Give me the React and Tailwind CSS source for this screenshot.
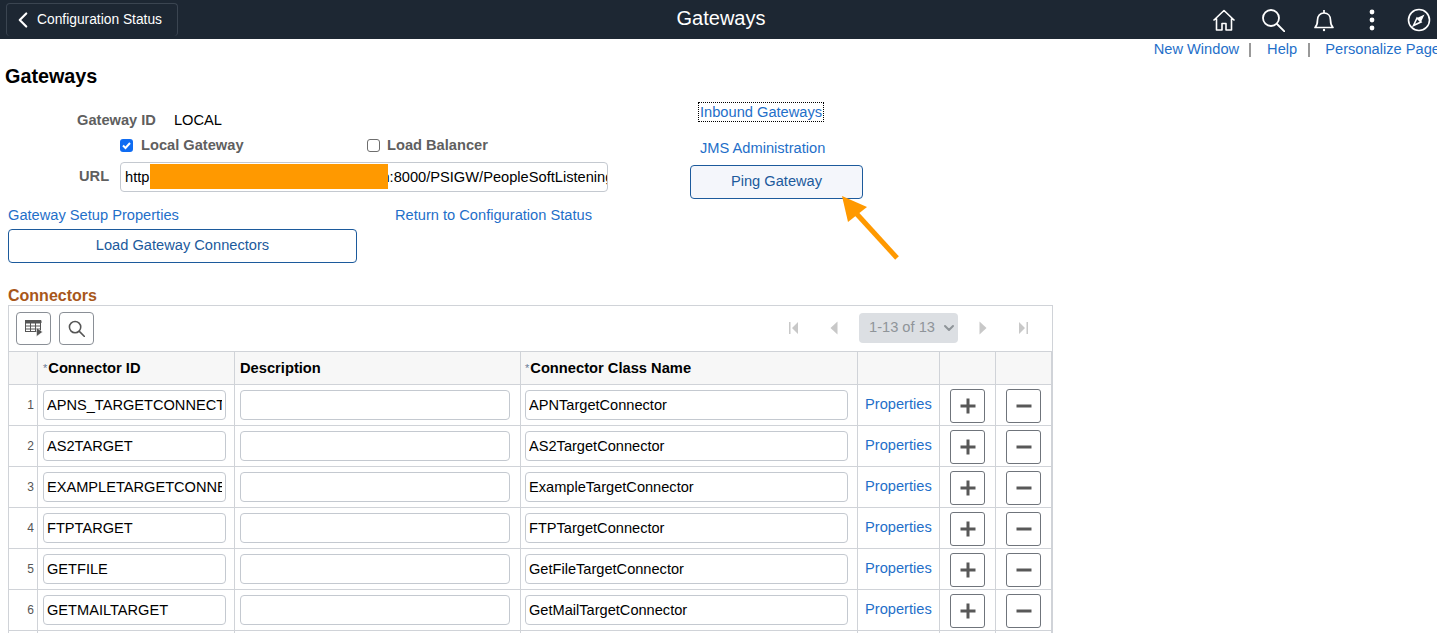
import React from 'react';
import { ChevronLeft, ChevronDown } from 'lucide-react';

const rows = [
  { id: 'APNS_TARGETCONNECTOR', cls: 'APNTargetConnector' },
  { id: 'AS2TARGET', cls: 'AS2TargetConnector' },
  { id: 'EXAMPLETARGETCONNECTOR', cls: 'ExampleTargetConnector' },
  { id: 'FTPTARGET', cls: 'FTPTargetConnector' },
  { id: 'GETFILE', cls: 'GetFileTargetConnector' },
  { id: 'GETMAILTARGET', cls: 'GetMailTargetConnector' },
  { id: 'HTTPTARGET', cls: 'HttpTargetConnector' },
];

const gridCols = 'grid grid-cols-[29px_197px_286px_337px_82px_56px_56px]';
const cell = 'border-r border-b border-[#d0d3d8] flex items-center min-w-0';
const textInput =
  'h-[30px] bg-white border border-[#c4c9d0] rounded-[4px] px-[3px] text-[14.6px] text-black outline-none';

const HomeIcon = () => (
  <svg width="24" height="24" viewBox="0 0 24 24" fill="none" stroke="white" strokeWidth="1.6">
    <path d="M1.5 12.5 12 2.5l10.5 10M4.5 10.5V22H10v-6.500h4V22h5.500V10.5" strokeLinejoin="round" />
  </svg>
);

const SearchIcon = ({ size = 24, color = 'white', sw = 1.8 }) => (
  <svg width={size} height={size} viewBox="0 0 24 24" fill="none" stroke={color} strokeWidth={sw}>
    <circle cx="10" cy="10" r="8" />
    <path d="m16 16 7.5 7.5" strokeLinecap="round" />
  </svg>
);

const BellIcon = () => (
  <svg width="22" height="24" viewBox="0 0 22 24" fill="none" stroke="white" strokeWidth="1.7">
    <path d="M2 19.5c2-2 2.500-4 2.500-7.500 0-4 2.500-7 6.500-7s6.500 3 6.500 7c0 3.500.5 5.500 2.500 7.500z" strokeLinejoin="round" />
    <path d="M11 5V2" />
    <circle cx="11" cy="22" r="1.2" fill="white" stroke="none" />
  </svg>
);

const DotsIcon = () => (
  <svg width="8" height="22" viewBox="0 0 8 22" fill="white">
    <circle cx="4" cy="3" r="2.4" />
    <circle cx="4" cy="11" r="2.4" />
    <circle cx="4" cy="19" r="2.4" />
  </svg>
);

const CompassIcon = () => (
  <svg width="24" height="24" viewBox="0 0 24 24" fill="none" stroke="white" strokeWidth="1.6">
    <circle cx="12" cy="12" r="10.5" />
    <path d="m17.5 6.5-3.500 7.500-4-4z" fill="white" stroke="none" />
    <path d="m6.5 17.5 3.500-7.500 4 4z" />
  </svg>
);

const GridIcon = () => (
  <svg width="18" height="17" viewBox="0 0 18 17" fill="none" stroke="#555" strokeWidth="1">
    <rect x="0.5" y="0.5" width="15" height="11" />
    <path d="M0 0.5h16V3H0z" fill="#555" />
    <path d="M0 6h16M0 9h16M5.5 3v9M10.5 3v9" />
    <path d="M11.5 7.5v9l6-4.500z" fill="#555" stroke="white" strokeWidth="0.5" />
  </svg>
);

const FirstIcon = ({ flip }) => (
  <svg width="14" height="14" viewBox="0 0 14 14" fill="#c8c8c8" className={flip ? 'rotate-180' : ''}>
    <path d="M1 1h1.5v12H1zM10 1v12L4 7z" />
  </svg>
);

const PrevIcon = ({ flip }) => (
  <svg width="8" height="14" viewBox="0 0 8 14" fill="#c8c8c8" className={flip ? 'rotate-180' : ''}>
    <path d="M7.5 0.5v13L0.5 7z" />
  </svg>
);

const Arrow = () => (
  <svg
    className="absolute left-[835px] top-[190px]"
    width="72"
    height="76"
    viewBox="0 0 72 76"
    fill="none"
  >
    <path d="M7 6 32 17 13 32z" fill="#ff9900" />
    <path d="M20 22 62 68" stroke="#ff9900" strokeWidth="5" />
  </svg>
);

const TopBar = () => (
  <div className="h-[39px] bg-[#1d2733] flex items-start shrink-0">
    <div className="flex-1">
      <div className="ml-[6px] mt-[3px] w-[172px] h-[33px] border border-[#3b4551] rounded-[4px] border-b-0 flex items-center text-white text-[13.8px]">
        <ChevronLeft size={26} strokeWidth={2} className="ml-[3px] mr-[1px]" />
        Configuration Status
      </div>
    </div>
    <div className="ml-[11px] text-center text-white text-[20px] leading-[37px]">Gateways</div>
    <div className="flex-1 flex justify-end items-center h-[39px] pr-[6px]">
      <HomeIcon />
      <span className="ml-[25px]"><SearchIcon /></span>
      <span className="ml-[28px]"><BellIcon /></span>
      <span className="ml-[33px]"><DotsIcon /></span>
      <span className="ml-[31px]"><CompassIcon /></span>
    </div>
  </div>
);

const TopLinks = () => (
  <div className="h-[20px] flex justify-end text-[14.65px] text-[#1f6fc9] whitespace-nowrap overflow-hidden">
    <a className="leading-[20px]">New Window</a>
    <span className="w-[2px] h-[14px] bg-[#999] mt-[4px] ml-[10px] mr-[16px]" />
    <a className="leading-[20px]">Help</a>
    <span className="w-[2px] h-[14px] bg-[#999] mt-[4px] ml-[11px] mr-[15px]" />
    <a className="leading-[20px] mr-[-3px]">Personalize Page</a>
  </div>
);

const GatewayForm = () => (
  <div className="flex text-[14.65px]">
    <div className="w-[682px] shrink-0 ml-[8px]">
      <div className="flex h-[24px] items-center pl-[69px] mt-[2px]">
        <span className="font-bold text-[#5f5f5f]">Gateway ID</span>
        <span className="ml-[18px] text-black">LOCAL</span>
      </div>
      <div className="flex h-[22px] items-center pl-[112px] mt-[2px]">
        <span className="mb-[2px] w-[13px] h-[13px] bg-[#0f6cf2] rounded-[3px] flex items-center justify-center">
          <svg width="11" height="11" viewBox="0 0 11 11" fill="none" stroke="white" strokeWidth="2">
            <path d="m2 5.5 2.500 2.500 4.500-5" />
          </svg>
        </span>
        <span className="ml-[8px] w-[226px] font-bold text-[#5f5f5f]">Local Gateway</span>
        <span className="mb-[2px] w-[13px] h-[13px] bg-white border border-[#6e6e6e] rounded-[3px]" />
        <span className="ml-[7px] font-bold text-[#5f5f5f]">Load Balancer</span>
      </div>
      <div className="flex items-center mt-[5px]">
        <span className="w-[112px] pl-[71px] font-bold text-[#5f5f5f]">URL</span>
        <div className="relative w-[488px] h-[30px] bg-white border border-[#c4c9d0] rounded-[4px] pl-[4px] text-black leading-[28px] whitespace-nowrap overflow-hidden">
          http
          <span className="ml-[232px]">n:8000/PSIGW/PeopleSoftListeningConnector</span>
          <span className="absolute left-[29px] top-[1px] w-[238px] h-[25px] bg-[#ff9900]" />
        </div>
      </div>
      <div className="flex mt-[14px] h-[20px] items-center text-[#1f6fc9]">
        <a className="w-[387px]">Gateway Setup Properties</a>
        <a>Return to Configuration Status</a>
      </div>
      <button className="mt-[3px] block w-[349px] h-[34px] bg-white border border-[#1c5a9c] rounded-[4px] text-[#1c5a9c]">
        Load Gateway Connectors
      </button>
    </div>
    <div className="w-[173px] -mt-[5px] text-[#1f6fc9]">
      <div className="h-[20px] flex">
        <a className="ml-[8px] border border-dotted border-black leading-[18px] px-[1px]">Inbound Gateways</a>
      </div>
      <a className="block ml-[10px] mt-[16px] leading-[20px]">JMS Administration</a>
      <button className="mt-[7px] block w-[173px] h-[34px] bg-[#f4f6fb] border border-[#1c5a9c] rounded-[4px] text-[#1c5a9c]">
        Ping Gateway
      </button>
    </div>
  </div>
);

const Toolbar = () => (
  <div className="h-[46px] flex items-center border-b border-[#d0d3d8] pl-[7px] pr-[23px] bg-white">
    <button className="w-[35px] h-[33px] border border-[#8a8f96] rounded-[4px] flex items-center justify-center">
      <GridIcon />
    </button>
    <button className="ml-[8px] w-[35px] h-[33px] border border-[#8a8f96] rounded-[4px] flex items-center justify-center">
      <SearchIcon size={17} color="#555" sw={2.2} />
    </button>
    <div className="ml-auto flex items-center pb-[2px]">
      <FirstIcon />
      <span className="ml-[28px]"><PrevIcon /></span>
      <div className="ml-[21px] w-[99px] h-[30px] bg-[#dcdfe3] rounded-[4px] flex items-center pl-[10px] text-[14.65px] text-[#8f9499]">
        1-13 of 13
        <ChevronDown size={16} strokeWidth={3} className="ml-[6px] text-[#8f9499]" />
      </div>
      <span className="ml-[21px]"><PrevIcon flip /></span>
      <span className="ml-[28px]"><FirstIcon flip /></span>
    </div>
  </div>
);

const RowButton = ({ minus }) => (
  <button className="w-[35px] h-[34px] bg-white border border-[#6f747b] rounded-[3px] flex items-center justify-center">
    <svg width="16" height="16" viewBox="0 0 16 16" fill="#585858">
      {minus ? <path d="M0.5 6.5h15v3H0.5z" /> : <path d="M6.5 0.5h3v6h6v3h-6v6h-3v-6h-6v-3h6z" />}
    </svg>
  </button>
);

const ConnectorRow = ({ row, index }) => (
  <div className={`${gridCols} h-[41px]`}>
    <div className={`${cell} bg-white justify-end pr-[3px] text-[12px] text-[#555]`}>{index + 1}</div>
    <div className={`${cell} pl-[5px]`}>
      <input readOnly value={row.id} className={`${textInput} w-[183px]`} />
    </div>
    <div className={`${cell} pl-[5px]`}>
      <input readOnly value="" className={`${textInput} w-[270px]`} />
    </div>
    <div className={`${cell} pl-[4px]`}>
      <input readOnly value={row.cls} className={`${textInput} w-[323px]`} />
    </div>
    <div className={`${cell} pl-[7px] text-[14.65px] text-[#1f6fc9]`}>Properties</div>
    <div className={`${cell} pl-[10px] pt-[2px]`}>
      <RowButton />
    </div>
    <div className={`${cell} pl-[10px] pt-[2px]`}>
      <RowButton minus />
    </div>
  </div>
);

const ConnectorsGrid = () => (
  <div className="ml-[8px] w-[1045px]">
    <div className="h-[20px] font-bold text-[#a8571a] text-[16px] leading-[22px]">Connectors</div>
    <div className="border-t border-l border-r border-[#d0d3d8]">
      <Toolbar />
      <div className={`${gridCols} h-[33px] bg-[#f7f7f7] text-[14.7px] font-bold text-black`}>
        <div className={cell} />
        <div className={`${cell} pl-[5px]`}>
          <span className="text-[11px] font-normal text-[#6a7b95] mr-[1px]">*</span>Connector ID
        </div>
        <div className={`${cell} pl-[5px]`}>Description</div>
        <div className={`${cell} pl-[4px]`}>
          <span className="text-[11px] font-normal text-[#6a7b95] mr-[1px]">*</span>Connector Class Name
        </div>
        <div className={cell} />
        <div className={cell} />
        <div className={cell} />
      </div>
      {rows.map((row, i) => (
        <ConnectorRow key={row.id} row={row} index={i} />
      ))}
    </div>
  </div>
);

export default function App() {
  return (
    <div className="relative h-[633px] overflow-hidden bg-white font-['Liberation_Sans',Arial,sans-serif]">
      <TopBar />
      <TopLinks />
      <h1 className="ml-[5px] mt-[3px] text-[19.8px] font-bold leading-[28px] text-black">Gateways</h1>
      <div className="mt-[17px]">
        <GatewayForm />
      </div>
      <div className="mt-[22px]">
        <ConnectorsGrid />
      </div>
      <Arrow />
    </div>
  );
}
